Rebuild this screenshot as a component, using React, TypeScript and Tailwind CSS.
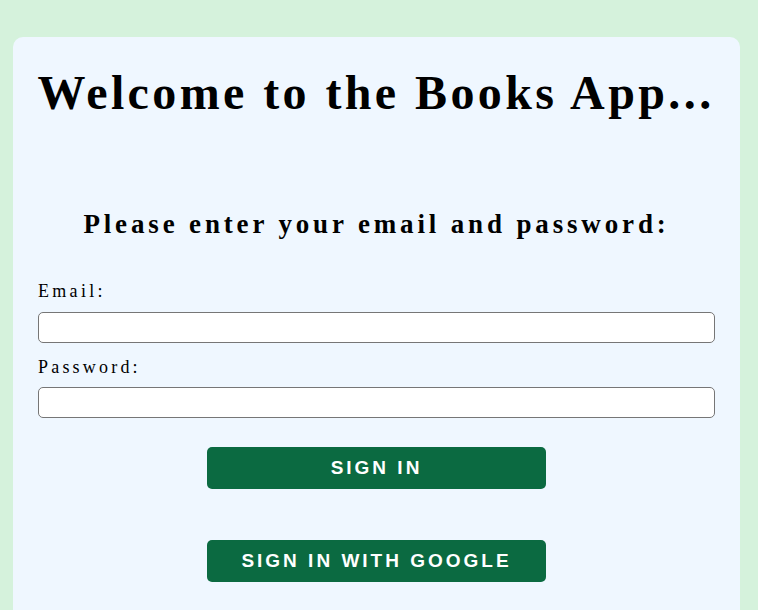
export default function App() {
  return (
    <div className="min-h-[610px] bg-[#d5f2dc] pt-[37px] pl-[13px] font-['Liberation_Serif',serif]">
      <div className="w-[727px] min-h-[600px] rounded-t-[10px] bg-[#eff7ff] px-[25px] pt-[24px]">
        <h1 className="-mx-[12px] whitespace-nowrap pr-[1px] text-center text-[48px] leading-[64px] font-bold tracking-[3.4px] text-black">
          Welcome to the Books App...
        </h1>
        <h2 className="mt-[83px] whitespace-nowrap text-center text-[27px] leading-[32px] font-bold tracking-[3.85px] text-black">
          Please enter your email and password:
        </h2>
        <form className="mt-[40px] flex flex-col" onSubmit={(e) => e.preventDefault()}>
          <label className="text-[18px] leading-[22px] tracking-[3.3px] text-black">Email:</label>
          <input
            type="email"
            className="mt-[10px] h-[31px] w-full rounded-[5px] border border-[#767676] bg-white px-2"
          />
          <label className="mt-[13px] text-[18px] leading-[22px] tracking-[3.2px] text-black">Password:</label>
          <input
            type="password"
            className="mt-[9px] h-[31px] w-full rounded-[5px] border border-[#767676] bg-white px-2"
          />
          <button
            type="submit"
            className="mx-auto mt-[29px] h-[42px] w-[339px] rounded-[5px] bg-[#0b6a41] font-['Liberation_Sans',sans-serif] text-[19px] font-bold tracking-[3px] text-white"
          >
            SIGN IN
          </button>
          <button
            type="button"
            className="mx-auto mt-[51px] h-[42px] w-[339px] rounded-[5px] bg-[#0b6a41] font-['Liberation_Sans',sans-serif] text-[19px] font-bold tracking-[3px] text-white"
          >
            SIGN IN WITH GOOGLE
          </button>
        </form>
      </div>
    </div>
  );
}
